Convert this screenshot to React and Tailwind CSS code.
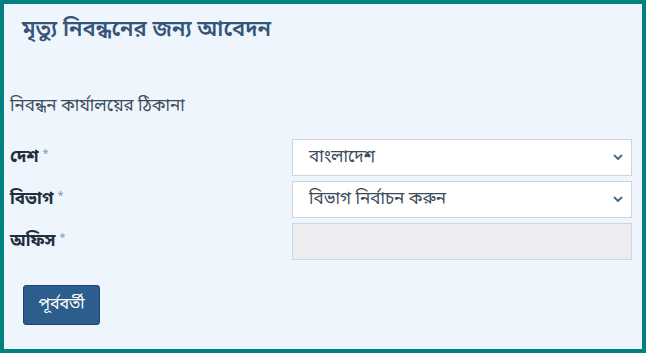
function Chevron() {
  return (
    <svg width="10" height="7" viewBox="0 0 10 7" className="text-[#4a6785]">
      <path d="M1.5 1.5 L5 5 L8.5 1.5" fill="none" stroke="currentColor" strokeWidth="1.8" strokeLinecap="round" strokeLinejoin="round" />
    </svg>
  )
}

function Label({ children }) {
  return (
    <span className="font-bold text-[17px] text-[#1f2f3f] leading-none">
      {children}
      <span className="ml-1 align-top text-[11px] font-normal text-[#8895a3]">*</span>
    </span>
  )
}

export default function App() {
  return (
    <div
      className="w-[646px] h-[353px] border-4 border-[#008080] bg-[#eef5fc] flex flex-col"
      style={{ fontFamily: '"Noto Sans Bengali", "Noto Sans", "Liberation Sans", sans-serif' }}
    >
      <h1 className="pl-[18px] pt-[13px] text-[22px] leading-[28px] text-[#36557a] font-semibold">মৃত্যু নিবন্ধনের জন্য আবেদন</h1>

      <p className="pl-[6px] mt-[50px] text-[17px] leading-[24px] text-[#3d4d5e]">নিবন্ধন কার্যালয়ের ঠিকানা</p>

      <div className="mt-[20px] grid grid-cols-[282px_340px] gap-y-[5px] pl-[6px] items-center">
        <Label>দেশ</Label>
        <div className="h-[37px] bg-white border border-[#cdd6e0] flex items-center justify-between pl-[16px] pr-[8px] text-[17px] text-[#3c4a5a]">
          <span>বাংলাদেশ</span>
          <Chevron />
        </div>

        <Label>বিভাগ</Label>
        <div className="h-[37px] bg-white border border-[#cdd6e0] flex items-center justify-between pl-[16px] pr-[8px] text-[17px] text-[#3c4a5a]">
          <span>বিভাগ নির্বাচন করুন</span>
          <Chevron />
        </div>

        <Label>অফিস</Label>
        <div className="h-[37px] bg-[#ebedf0] border border-[#cdd6e0]"></div>
      </div>

      <div className="pl-[19px] mt-[25px]">
        <button className="w-[77px] h-[40px] rounded-[3px] bg-[#2c5d8d] border border-[#1f4469] text-white text-[16px]">পূর্ববর্তী</button>
      </div>
    </div>
  )
}
